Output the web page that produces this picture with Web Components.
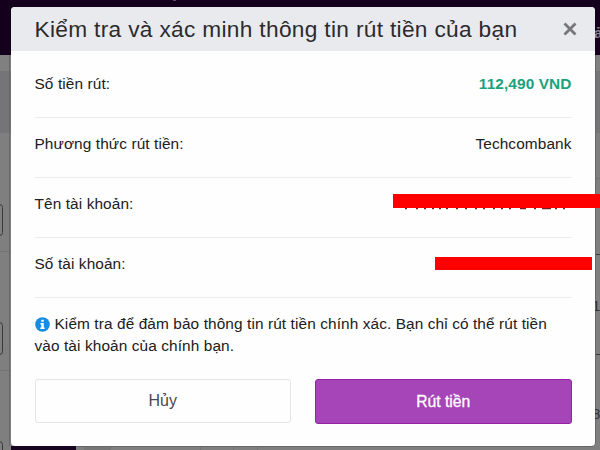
<!DOCTYPE html>
<html lang="vi">
<head>
<meta charset="utf-8">
<title>Rút tiền</title>
<style>
  body {
    margin: 0;
    height: 450px;
    overflow: hidden;
    position: relative;
    font-family: "Liberation Sans", Arial, sans-serif;
    color: #202020;
  }
</style>
</head>
<body>
<page-backdrop></page-backdrop>
<withdraw-dialog>
  <span slot="title">Kiểm tra và xác minh thông tin rút tiền của bạn</span>
  <detail-row label="Số tiền rút:" strong>112,490 VND</detail-row>
  <detail-row label="Phương thức rút tiền:">Techcombank</detail-row>
  <detail-row label="Tên tài khoản:"><redacted-value kind="name"></redacted-value></detail-row>
  <detail-row label="Số tài khoản:"><redacted-value kind="number"></redacted-value></detail-row>
  <info-note slot="note"><span>Kiểm tra để đảm bảo thông tin rút tiền chính xác. Bạn chỉ có thể rút tiền</span><br><span>vào tài khoản của chính bạn.</span></info-note>
  <action-button slot="actions">Hủy</action-button>
  <action-button slot="actions" primary>Rút tiền</action-button>
</withdraw-dialog>

<script>
function render(element, html) {
  const template = document.createElement('template');
  template.innerHTML = html;
  element.attachShadow({ mode: 'open' }).appendChild(template.content.cloneNode(true));
}

class PageBackdrop extends HTMLElement {
  constructor() {
    super();
    render(this, `
      <style>
        :host { display: flex; flex-direction: column; height: 450px; background: #7f7f7f; }
        .nav { height: 55px; background: #14001c; }
        .strip { height: 17px; background: #808080; border-bottom: 1px solid #747474; box-sizing: border-box; }
        .band { height: 61px; background: #757577; }
        .page { flex: 1; background: #7f7f7f; }
        svg { position: absolute; left: 0; top: 0; }
      </style>
      <div class="nav"></div>
      <div class="strip"></div>
      <div class="band"></div>
      <div class="page"></div>
      <svg width="600" height="450" font-family="Liberation Sans, sans-serif">
        <g fill="none" stroke="#39393c">
          <rect x="-10" y="204.500" width="12.500" height="31" rx="3"/>
          <rect x="-10" y="322.500" width="12.500" height="32" rx="3"/>
          <rect x="-10" y="441.500" width="12.500" height="31" rx="3"/>
          <path d="M595 254.500h5M595 354.500h5"/>
        </g>
        <path stroke="#747474" d="M0 251.500h11M0 370.500h11M595 178.500h5M200.500 447v3M233.500 447v3M257.500 447v3"/>
        <path fill="#767676" d="M84 447h27v3H84z"/>
        <path fill="#17051f" d="M11 446h65v4H11z"/>
        <path stroke="#686868" d="M9.500 55v391M595.500 55v389M77 446.500h516"/>
        <text x="594" y="38" font-size="15" font-weight="bold" fill="#8b848e">ả</text>
        <text x="592" y="311" font-size="15" fill="#343438">1</text>
        <text x="592" y="419" font-size="15" fill="#343438">8</text>
        <path stroke="#5c4d63" d="M173 .5h3"/>
      </svg>
    `);
  }
}

class WithdrawDialog extends HTMLElement {
  constructor() {
    super();
    render(this, `
      <style>
        :host {
          position: absolute; left: 11px; top: 7px;
          display: block; box-sizing: border-box; width: 584px; height: 439px;
          background: #fefefe; border-radius: 4px;
        }
        header {
          display: flex; align-items: center; justify-content: space-between;
          box-sizing: border-box; height: 44px; padding: 0 18px 0 23.500px;
          background: #e9eaee; border-radius: 4px 4px 0 0;
        }
        h1 { margin: 0; font-size: 22.700px; letter-spacing: .32px; line-height: 44px; font-weight: normal; color: #2b2b2e; white-space: nowrap; }
        .body { padding: 7px 23.500px 0; }
        .actions { display: grid; grid-template-columns: 1fr 1fr; gap: 24px; margin-top: 22px; }
      </style>
      <header>
        <h1><slot name="title"></slot></h1>
        <svg width="14" height="14" viewBox="0 0 14 14"><path d="M1.500 1.500l11 11m0-11l-11 11" stroke="#77777a" stroke-width="2.800"/></svg>
      </header>
      <div class="body">
        <slot></slot>
        <slot name="note"></slot>
        <div class="actions"><slot name="actions"></slot></div>
      </div>
    `);
  }
}

class DetailRow extends HTMLElement {
  constructor() {
    super();
    render(this, `
      <style>
        :host {
          display: flex; justify-content: space-between; align-items: center;
          box-sizing: border-box; height: 60px; padding-bottom: 8px;
          border-bottom: 1px solid #ededed;
          font-size: 15.400px; letter-spacing: .1px; white-space: nowrap;
        }
        :host([strong]) .value { font-weight: bold; color: #19a27b; }
      </style>
      <span class="label"></span>
      <span class="value"><slot></slot></span>
    `);
    this.shadowRoot.querySelector('.label').textContent = this.getAttribute('label');
  }
}

class RedactedValue extends HTMLElement {
  constructor() {
    super();
    render(this, `
      <style>
        :host { display: block; position: relative; width: 168px; height: 17px; }
        .bar { position: absolute; background: #fe0000; }
        :host([kind="name"]) .bar { left: -10.500px; top: -1px; width: 207px; height: 14px; }
        :host([kind="number"]) .bar { left: 31.500px; top: 2px; width: 157px; height: 13px; }
        :host([kind="number"]) svg { display: none; }
        svg { position: absolute; left: 0; top: 12px; }
      </style>
      <svg width="168" height="3"><path d="M1 1.500h2M12 1.500h2m6 0h2m6 0h2m5 0h2m5 0h2m8 0h2m7 0h2m8 0h2m6 0h2m8 0h2m6 0h2m6 0h2m9 0h6m8 0h2m6 0h9m4 0h2m6 0h2" stroke="#6d2020" stroke-width="1.500"/></svg>
      <div class="bar"></div>
    `);
  }
}

class InfoNote extends HTMLElement {
  constructor() {
    super();
    render(this, `
      <style>
        :host { display: block; padding-top: 15px; font-size: 15.400px; letter-spacing: .1px; line-height: 22px; white-space: nowrap; }
        svg { vertical-align: -3px; margin-right: 5px; }
      </style>
      <svg width="15" height="15" viewBox="0 0 15 15"><circle cx="7.500" cy="7.500" r="7.300" fill="#168de2"/><path fill="#fff" d="M6.300 2.800h2.500v2H6.300zM5.500 6h3.300v4.400h.9v1.500H5.300v-1.500h1V7.400h-.8z"/></svg><slot></slot>
    `);
  }
}

class ActionButton extends HTMLElement {
  constructor() {
    super();
    render(this, `
      <style>
        :host { display: block; }
        button {
          display: block; width: 100%; height: 44px; padding: 0;
          border: 1px solid #e4e4e9; border-radius: 3px; background: #fefefe;
          font: 16px "Liberation Sans", Arial, sans-serif; color: #48484d;
        }
        :host([primary]) button { height: 45px; border-color: #9421a8; background: #a545b8; color: #fff; font-size: 15.700px; -webkit-text-stroke: .3px #fff; }
      </style>
      <button type="button"><slot></slot></button>
    `);
  }
}

customElements.define('page-backdrop', PageBackdrop);
customElements.define('withdraw-dialog', WithdrawDialog);
customElements.define('detail-row', DetailRow);
customElements.define('redacted-value', RedactedValue);
customElements.define('info-note', InfoNote);
customElements.define('action-button', ActionButton);
</script>
</body>
</html>
